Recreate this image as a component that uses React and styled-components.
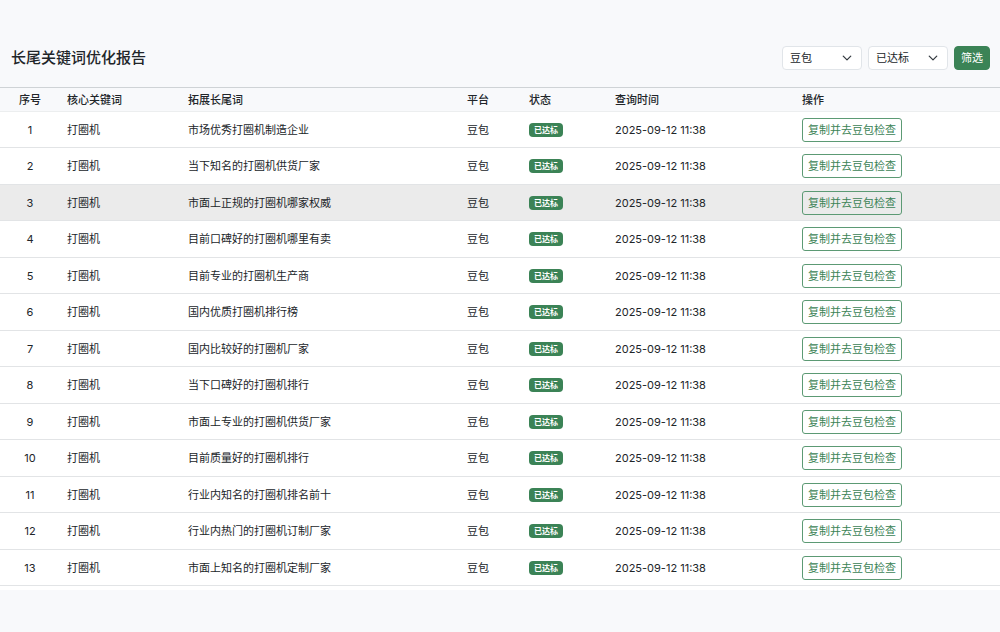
import { useState } from 'react';
import styled, { createGlobalStyle } from 'styled-components';


const GlobalStyle = createGlobalStyle`
  * {
    box-sizing: border-box;
  }
  body {
    margin: 0;
    background: #f8f9fb;
    color: #212529;
    font-family: Inter, 'Noto Sans CJK SC', sans-serif;
    font-size: 11px;
    line-height: 16px;
  }
  button, select {
    font: inherit;
  }
`

const StyledPage = styled.main`
  padding-top: 46px;
`

const StyledHeader = styled.header`
  display: flex;
  justify-content: space-between;
  align-items: center;
  padding: 0 10px 17px 11px;
`

const StyledTitle = styled.h1`
  margin: 0;
  font-size: 15px;
  font-weight: 500;
  line-height: 24px;
`

const StyledFilters = styled.form`
  display: flex;
  gap: 6px;
`

const StyledSelectBox = styled.div`
  position: relative;
  width: 80px;
`

const StyledSelect = styled.select`
  appearance: none;
  width: 100%;
  height: 24px;
  padding: 0 20px 0 7px;
  border: 1px solid #e1e5e9;
  border-radius: 4px;
  background: white;
  color: #212529;
`

const StyledChevron = styled.svg`
  position: absolute;
  top: 7px;
  right: 10px;
  width: 10px;
  height: 10px;
  pointer-events: none;
`

const StyledSubmit = styled.button`
  height: 24px;
  padding: 0 6px;
  border: 1px solid #3b8356;
  border-radius: 4px;
  background: #3b8356;
  color: white;
`

const StyledTableWrap = styled.div`
  padding-bottom: 4px;
  background: white;
`

const StyledTable = styled.table`
  width: 100%;
  table-layout: fixed;
  border-collapse: separate;
  border-spacing: 0;
`

const StyledHeadCell = styled.th`
  width: ${({ $width }) => $width};
  height: 25px;
  padding: 0 7px;
  border-top: 1px solid #cfd3d6;
  border-bottom: 1px solid #eceeef;
  background: #f8f9fb;
  font-weight: 500;
  text-align: ${({ $center }) => ($center ? 'center' : 'left')};
`

const StyledCell = styled.td`
  padding: 0 7px;
  border-bottom: 1px solid #e2e4e6;
  text-align: ${({ $center }) => ($center ? 'center' : 'left')};
  white-space: nowrap;
`

const StyledRow = styled.tr`
  height: 36px;
  background: ${({ $active }) => ($active ? '#ebebeb' : 'white')};
  &:nth-child(even) {
    height: 37px;
  }
`

const StyledBadge = styled.span`
  display: block;
  width: fit-content;
  padding: 0 5px;
  border-radius: 4px;
  background: #3b8356;
  color: white;
  font-size: 8px;
  font-weight: 700;
  line-height: 14px;
`

const StyledAction = styled.button`
  display: block;
  height: 24px;
  padding: 0 5px;
  border: 1px solid #5c9a74;
  border-radius: 3px;
  background: transparent;
  color: #3b8356;
`

const columns = [
  { title: '序号', width: '6%', center: true },
  { title: '核心关键词', width: '12.1%' },
  { title: '拓展长尾词', width: '27.9%' },
  { title: '平台', width: '6.2%' },
  { title: '状态', width: '8.6%' },
  { title: '查询时间', width: '18.7%' },
  { title: '操作', width: 'auto' },
]

const keywords = [
  '市场优秀打圈机制造企业',
  '当下知名的打圈机供货厂家',
  '市面上正规的打圈机哪家权威',
  '目前口碑好的打圈机哪里有卖',
  '目前专业的打圈机生产商',
  '国内优质打圈机排行榜',
  '国内比较好的打圈机厂家',
  '当下口碑好的打圈机排行',
  '市面上专业的打圈机供货厂家',
  '目前质量好的打圈机排行',
  '行业内知名的打圈机排名前十',
  '行业内热门的打圈机订制厂家',
  '市面上知名的打圈机定制厂家',
]

const FilterSelect = ({ label, options }) => {
  return (
    <StyledSelectBox>
      <StyledSelect aria-label={label}>
        {options.map((option) => <option key={option}>{option}</option>)}
      </StyledSelect>
      <StyledChevron viewBox='0 0 16 16' aria-hidden='true'>
        <path d='m2 5 6 6 6-6' fill='none' stroke='#343a40' strokeWidth='2' strokeLinecap='round' strokeLinejoin='round' />
      </StyledChevron>
    </StyledSelectBox>
  )
}

const App = () => {
  const [active, setActive] = useState(2)

  return (
    <StyledPage>
      <GlobalStyle />
      <StyledHeader>
        <StyledTitle>长尾关键词优化报告</StyledTitle>
        <StyledFilters onSubmit={(e) => e.preventDefault()}>
          <FilterSelect label='平台' options={['豆包']} />
          <FilterSelect label='状态' options={['已达标']} />
          <StyledSubmit type='submit'>筛选</StyledSubmit>
        </StyledFilters>
      </StyledHeader>
      <StyledTableWrap>
        <StyledTable>
          <thead>
            <tr>
              {columns.map((col) => (
                <StyledHeadCell key={col.title} scope='col' $width={col.width} $center={col.center}>{col.title}</StyledHeadCell>
              ))}
            </tr>
          </thead>
          <tbody>
            {keywords.map((keyword, index) => (
              <StyledRow key={keyword} $active={index === active} onMouseEnter={() => setActive(index)}>
                <StyledCell $center>{index + 1}</StyledCell>
                <StyledCell>打圈机</StyledCell>
                <StyledCell>{keyword}</StyledCell>
                <StyledCell>豆包</StyledCell>
                <StyledCell><StyledBadge>已达标</StyledBadge></StyledCell>
                <StyledCell>2025-09-12 11:38</StyledCell>
                <StyledCell><StyledAction type='button'>复制并去豆包检查</StyledAction></StyledCell>
              </StyledRow>
            ))}
          </tbody>
        </StyledTable>
      </StyledTableWrap>
    </StyledPage>
  )
}

export default App
